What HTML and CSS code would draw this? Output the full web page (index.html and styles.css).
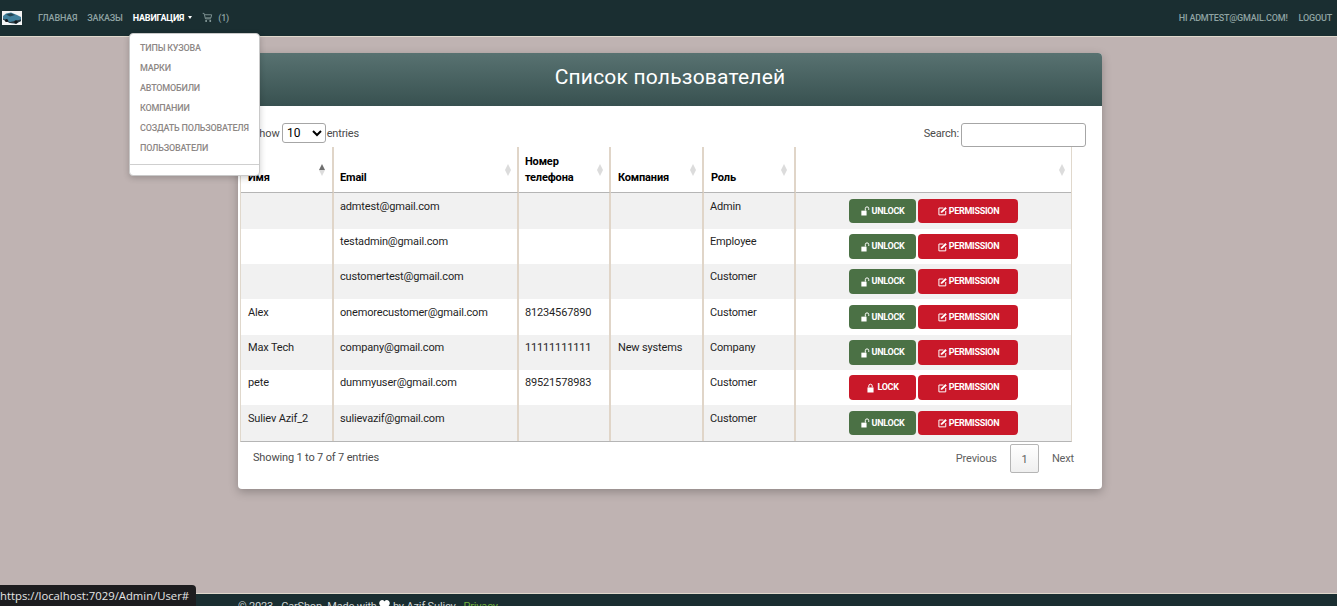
FILE: index.html
```html
<!DOCTYPE html>
<html lang="en">
<head>
    <meta charset="UTF-8">
    <meta name="viewport" content="width=device-width, initial-scale=1.0">
    <title>Список пользователей</title>
    <link rel="stylesheet" href="styles.css">
</head>
<body>
    <!-- Top navigation -->
    <nav class="navbar">
        <div class="nav-left">
            <svg class="logo" viewBox="0 0 20 14" aria-label="CarShop">
                <rect width="20" height="14" fill="#f4f4f4"/>
                <path d="M1 5 L4 2.5 L9 1.5 L15 4 L19 6 L19 10 L14 12.5 L8 12 L1 8.5 Z" fill="#41809c"/>
                <path d="M4 3.5 L9 2.2 L13 4 L8 5.5 Z" fill="#23424f"/>
                <path d="M1 7.5 L8 11 L19 8.5 L19 10 L14 12.5 L8 12 L1 8.5 Z" fill="#2b3a42"/>
                <circle cx="4.5" cy="9.5" r="1.6" fill="#14181b"/>
                <circle cx="14" cy="11" r="1.7" fill="#14181b"/>
            </svg>
            <a class="nav-link" href="#">ГЛАВНАЯ</a>
            <a class="nav-link" href="#">ЗАКАЗЫ</a>
            <a class="nav-link active" href="#">НАВИГАЦИЯ<span class="caret"></span></a>
            <a class="nav-link cart" href="#">
                <svg class="cart-icon" viewBox="0 0 16 16"><path d="M1 2h2l2 8h8M4 4h10l-1 4.5H5" fill="none" stroke="currentColor" stroke-width="1.2"/><circle cx="6" cy="13" r="1.4" fill="currentColor"/><circle cx="12" cy="13" r="1.4" fill="currentColor"/></svg>
                (1)
            </a>
        </div>
        <div class="nav-right">
            <a class="nav-link" href="#">HI ADMTEST@GMAIL.COM!</a>
            <a class="nav-link" href="#">LOGOUT</a>
        </div>
    </nav>

    <!-- Dropdown menu -->
    <div class="dropdown">
        <a href="#">ТИПЫ КУЗОВА</a>
        <a href="#">МАРКИ</a>
        <a href="#">АВТОМОБИЛИ</a>
        <a href="#">КОМПАНИИ</a>
        <a href="#">СОЗДАТЬ ПОЛЬЗОВАТЕЛЯ</a>
        <a href="#">ПОЛЬЗОВАТЕЛИ</a>
        <hr class="dropdown-divider">
    </div>

    <main class="content">
        <section class="card">
            <h1 class="card-header">Список пользователей</h1>
            <div class="card-body">
                <div class="table-top">
                    <label class="length">Show
                        <select class="length-select"><option>10</option></select>
                        entries</label>
                    <label class="search">Search: <input class="search-input" type="text"></label>
                </div>
                <table class="users">
                    <thead>
                        <tr>
                            <th class="col-name sorted">Имя</th>
                            <th class="col-email">Email</th>
                            <th class="col-phone">Номер телефона</th>
                            <th class="col-company">Компания</th>
                            <th class="col-role">Роль</th>
                            <th class="col-actions"></th>
                        </tr>
                    </thead>
                    <tbody>
                        <tr>
                            <td></td><td>admtest@gmail.com</td><td></td><td></td><td>Admin</td>
                            <td class="actions"><a class="btn green" href="#"><svg class="icon"><use href="#i-unlock"/></svg>UNLOCK</a><a class="btn red wide" href="#"><svg class="icon"><use href="#i-edit"/></svg>PERMISSION</a></td>
                        </tr>
                        <tr>
                            <td></td><td>testadmin@gmail.com</td><td></td><td></td><td>Employee</td>
                            <td class="actions"><a class="btn green" href="#"><svg class="icon"><use href="#i-unlock"/></svg>UNLOCK</a><a class="btn red wide" href="#"><svg class="icon"><use href="#i-edit"/></svg>PERMISSION</a></td>
                        </tr>
                        <tr>
                            <td></td><td>customertest@gmail.com</td><td></td><td></td><td>Customer</td>
                            <td class="actions"><a class="btn green" href="#"><svg class="icon"><use href="#i-unlock"/></svg>UNLOCK</a><a class="btn red wide" href="#"><svg class="icon"><use href="#i-edit"/></svg>PERMISSION</a></td>
                        </tr>
                        <tr>
                            <td>Alex</td><td>onemorecustomer@gmail.com</td><td>81234567890</td><td></td><td>Customer</td>
                            <td class="actions"><a class="btn green" href="#"><svg class="icon"><use href="#i-unlock"/></svg>UNLOCK</a><a class="btn red wide" href="#"><svg class="icon"><use href="#i-edit"/></svg>PERMISSION</a></td>
                        </tr>
                        <tr>
                            <td>Max Tech</td><td>company@gmail.com</td><td>11111111111</td><td>New systems</td><td>Company</td>
                            <td class="actions"><a class="btn green" href="#"><svg class="icon"><use href="#i-unlock"/></svg>UNLOCK</a><a class="btn red wide" href="#"><svg class="icon"><use href="#i-edit"/></svg>PERMISSION</a></td>
                        </tr>
                        <tr>
                            <td>pete</td><td>dummyuser@gmail.com</td><td>89521578983</td><td></td><td>Customer</td>
                            <td class="actions"><a class="btn red" href="#"><svg class="icon"><use href="#i-lock"/></svg>LOCK</a><a class="btn red wide" href="#"><svg class="icon"><use href="#i-edit"/></svg>PERMISSION</a></td>
                        </tr>
                        <tr>
                            <td>Suliev Azif_2</td><td>sulievazif@gmail.com</td><td></td><td></td><td>Customer</td>
                            <td class="actions"><a class="btn green" href="#"><svg class="icon"><use href="#i-unlock"/></svg>UNLOCK</a><a class="btn red wide" href="#"><svg class="icon"><use href="#i-edit"/></svg>PERMISSION</a></td>
                        </tr>
                    </tbody>
                </table>
                <div class="table-bottom">
                    <div class="info">Showing 1 to 7 of 7 entries</div>
                    <div class="pager">
                        <a href="#">Previous</a>
                        <a class="current" href="#">1</a>
                        <a href="#">Next</a>
                    </div>
                </div>
            </div>
        </section>
    </main>

    <footer class="footer">
        <div class="footer-text">© 2023 - CarShop. Made with <svg class="heart" viewBox="0 0 12 11"><path d="M6 11 L1 6 C-1 3 1 0 3.5 0 C5 0 5.6 1 6 1.6 C6.4 1 7 0 8.5 0 C11 0 13 3 11 6 Z" fill="#fff"/></svg> by Azif Suliev. <a class="privacy" href="#">Privacy</a></div>
    </footer>

    <!-- Browser link preview -->
    <div class="status-tip">https://localhost:7029/Admin/User#</div>

    <svg class="icon-defs">
        <symbol id="i-unlock" viewBox="0 0 10 10">
            <path d="M0.4 4.6h5.8V10H0.4z" fill="currentColor"/>
            <path d="M4.8 4.6V2.3a1.9 1.9 0 0 1 3.8 0v1.5" fill="none" stroke="currentColor" stroke-width="1.1"/>
        </symbol>
        <symbol id="i-lock" viewBox="0 0 10 10">
            <path d="M1.6 4.4h6.8V10H1.6z" fill="currentColor"/>
            <path d="M3.1 4.4V2.7a1.9 1.9 0 0 1 3.8 0v1.7" fill="none" stroke="currentColor" stroke-width="1.1"/>
        </symbol>
        <symbol id="i-edit" viewBox="0 0 10 10">
            <path d="M8.6 5v4.3H1V1.7h5" fill="none" stroke="currentColor" stroke-width="1.1"/>
            <path d="M3 7.2l.5-2L8.2.5l1.6 1.6L5 6.8z" fill="currentColor"/>
        </symbol>
    </svg>
</body>
</html>
```

FILE: styles.css
```css
* {
    box-sizing: border-box;
}
html, body {
    height: 100%;
}
body {
    margin: 0;
    font-family: Roboto, "Liberation Sans", sans-serif;
    font-size: 11px;
    letter-spacing: -0.16px;
    color: #212529;
    background-color: #bfb3b2;
    display: flex;
    flex-direction: column;
    overflow: hidden;
}
a {
    text-decoration: none;
}

/* navbar */
.navbar {
    height: 37px;
    flex-shrink: 0;
    background-color: #1a2e31;
    border-bottom: 1px solid #e0d8cc;
    display: flex;
    justify-content: space-between;
    align-items: center;
    padding: 0 5px 1px 2px;
}
.nav-left, .nav-right {
    display: flex;
    align-items: center;
}
.logo {
    width: 20px;
    height: 14px;
    margin-right: 16px;
}
.nav-link {
    font-size: 9px;
    font-weight: 500;
    letter-spacing: -0.18px;
    color: #8fa3a3;
    margin-right: 10px;
    white-space: nowrap;
}
.nav-right .nav-link {
    margin-right: 0;
    margin-left: 11px;
}
.nav-link.active {
    color: #fff;
    font-weight: 700;
}
.caret {
    display: inline-block;
    margin-left: 4px;
    vertical-align: 2px;
    border-top: 3px solid #fff;
    border-left: 2.5px solid transparent;
    border-right: 2.5px solid transparent;
}
.cart {
    display: flex;
    align-items: center;
    gap: 5px;
}
.cart-icon {
    width: 11px;
    height: 11px;
}

/* dropdown */
.dropdown {
    position: absolute;
    left: 129px;
    top: 33px;
    width: 130.5px;
    height: 143px;
    padding-top: 5px;
    background-color: #fff;
    border: 1px solid #c9c9c9;
    border-radius: 4px;
    box-shadow: 0 2px 6px rgba(0, 0, 0, 0.2);
    z-index: 5;
}
.dropdown a {
    display: block;
    height: 20px;
    line-height: 19px;
    padding-left: 10px;
    font-size: 9px;
    font-weight: 500;
    letter-spacing: -0.2px;
    color: #8d8785;
    white-space: nowrap;
}
.dropdown-divider {
    margin: 5px 0 0;
    border: 0;
    border-top: 1px solid #cfcfcf;
}

/* main card */
.content {
    flex: 1;
    min-height: 0;
    padding: 16px 235px 0 238px;
}
.card {
    width: 864px;
    height: 436px;
    background-color: #fff;
    border-radius: 4px;
    box-shadow: 0 3px 10px rgba(0, 0, 0, 0.25);
}
.card-header {
    margin: 0;
    height: 53px;
    line-height: 49px;
    text-align: center;
    font-size: 21px;
    font-weight: 400;
    letter-spacing: 0.2px;
    color: #fff;
    background: linear-gradient(to bottom, #587271, #385150);
    border-radius: 4px 4px 0 0;
}
.card-body {
    padding: 17px 16px 0 2px;
}
.table-top {
    height: 24px;
    display: flex;
    justify-content: space-between;
    align-items: flex-start;
    padding-left: 13px;
    color: #4b4b4b;
}
.length {
    line-height: 20px;
}
.search {
    display: flex;
    align-items: flex-start;
    gap: 2px;
    line-height: 22px;
}
.length-select {
    width: 44px;
    height: 20px;
    margin: 0 -2px 0 0;
    font-family: Roboto, sans-serif;
    font-size: 12px;
    background-color: #fff;
    border: 1px solid #a6a6a6;
    border-radius: 3px;
}
.search-input {
    width: 125px;
    height: 24px;
    border: 1px solid #a6a6a6;
    border-radius: 3px;
    background-color: #fff;
}

/* table */
.users {
    width: 832px;
    table-layout: fixed;
    border-collapse: separate;
    border-spacing: 0;
    border-left: 1px solid #e0d8cc;
    border-right: 1px solid #e0d8cc;
    border-bottom: 1px solid #b5b5b5;
}
.users th {
    position: relative;
    height: 46px;
    padding: 0 22px 6px 7px;
    vertical-align: bottom;
    text-align: left;
    font-size: 11px;
    line-height: 16px;
    font-weight: 700;
    color: #000;
    border-bottom: 1px solid #b5b5b5;
    border-right: 2px solid #e0d5c8;
}
.users th:last-child, .users td:last-child {
    border-right: 0;
}
.users th::before, .users th::after {
    content: "";
    position: absolute;
    right: 6px;
    border-left: 3.5px solid transparent;
    border-right: 3.5px solid transparent;
}
.users th::before {
    top: 17px;
    border-bottom: 6px solid #dcdcdc;
}
.users th::after {
    top: 23px;
    border-top: 6px solid #dcdcdc;
}
.users th.sorted::before {
    border-bottom-color: #6f6f6f;
}
.users th.sorted::before, .users th.sorted::after {
    right: 7px;
}
.users th.col-role::before, .users th.col-role::after {
    right: 7px;
}
.col-name { width: 93px; }
.col-email { width: 185px; }
.col-phone { width: 92px; }
.col-company { width: 93px; }
.col-role { width: 92px; }
.users td {
    height: 35px;
    padding: 5px 7px 0;
    vertical-align: top;
    line-height: 15px;
    color: #1f1f1f;
    border-right: 2px solid #e0d5c8;
}
.users th.col-email, .users th.col-phone,
.users tbody td:nth-child(2), .users tbody td:nth-child(3), .users tbody td:nth-child(5) {
    padding-left: 6px;
}
/* every third row comes out a pixel taller in the original */
.users tbody tr:nth-child(3n+1) td {
    height: 36px;
    padding-top: 6px;
}
.users tbody tr:nth-child(odd) td {
    background-color: #f1f1f1;
}
.users td.actions {
    padding-left: 0;
    padding-right: 0;
    text-align: center;
    white-space: nowrap;
}

/* buttons */
.btn {
    display: inline-flex;
    align-items: center;
    justify-content: center;
    gap: 2px;
    width: 67px;
    height: 25px;
    margin-right: 2px;
    font-size: 9px;
    font-weight: 700;
    letter-spacing: -0.3px;
    color: #fff;
    border-radius: 4px;
    vertical-align: top;
}
.users tbody tr:nth-child(3n+1) .btn {
    height: 24px;
}
.btn.wide {
    width: 100px;
    margin-right: 0;
    padding-left: 1px;
}
.btn.green {
    background-color: #4b7145;
}
.btn.red {
    background-color: #c91829;
}
.icon {
    width: 9px;
    height: 10px;
}
.icon-defs {
    display: none;
}

/* under table */
.table-bottom {
    display: flex;
    justify-content: space-between;
    width: 832px;
    padding: 2px 0 0 13px;
    color: #4b4b4b;
}
.info {
    padding-top: 7px;
}
.pager {
    display: flex;
    align-items: center;
    margin-right: -12px;
}
.pager a {
    color: #5f5f5f;
    padding: 0 10px;
    height: 29px;
    line-height: 29px;
}
.pager a.current {
    margin: 0 3px;
    width: 29px;
    padding: 0;
    text-align: center;
    border: 1px solid #b5b5b5;
    border-radius: 2px;
    background: linear-gradient(to bottom, #fff, #efefef);
}

/* footer */
.footer {
    height: 13px;
    flex-shrink: 0;
    overflow: hidden;
    background-color: #1a2e31;
    border-top: 1px solid #e0d8cc;
    padding: 5px 0 0 238px;
    color: #cfd4d4;
    line-height: 15px;
}
.heart {
    width: 11px;
    height: 10px;
}
.privacy {
    color: #6fae3c;
    margin-left: 3px;
}

.status-tip {
    position: absolute;
    left: -4px;
    bottom: 0;
    height: 21px;
    padding: 2px 7px 0 4px;
    background-color: #1d1d1f;
    border-radius: 0 4px 0 0;
    color: #e6e6e6;
    font-family: "Open Sans", sans-serif;
    font-size: 11.3px;
    letter-spacing: 0;
    line-height: 18px;
    z-index: 10;
}
```
